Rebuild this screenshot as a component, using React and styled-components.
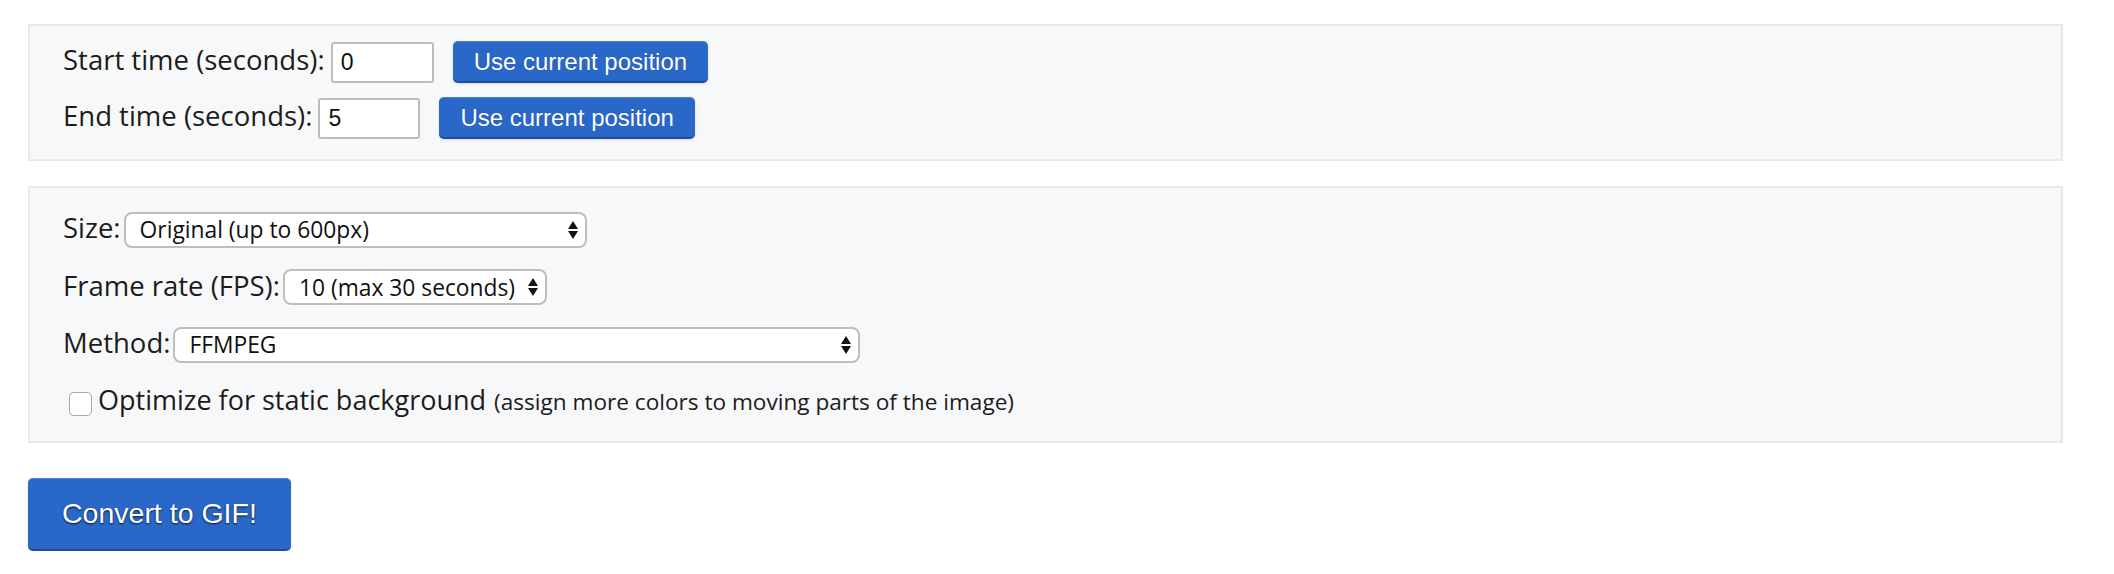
import React from "react";
import styled, { createGlobalStyle } from "styled-components";

const GlobalStyle = createGlobalStyle`
  html, body { margin: 0; padding: 0; background: #ffffff; }
  body { font-family: "Open Sans", "Noto Sans", sans-serif; color: #1c1c1c; }
  * { box-sizing: border-box; }
`;

const Page = styled.div`
  padding: 24px 51px 0 28px;
`;

const Panel = styled.div`
  background: #f7f8fa;
  border: 2px solid #e8e9eb;
  padding: ${(p) => p.$pad};
  & + & { margin-top: 25px; }
`;

const Row = styled.div`
  display: flex;
  align-items: baseline;
  margin-top: ${(p) => p.$gap || 0}px;
`;

const Label = styled.label`
  font-family: "Open Sans", "Noto Sans", sans-serif;
  font-size: ${(p) => p.$size || 27.5}px;
  line-height: 1.25;
  color: #1c1c1c;
  margin-right: ${(p) => p.$gap}px;
  white-space: nowrap;
`;

const TimeInput = styled.input`
  width: ${(p) => p.$w}px;
  height: 41px;
  border: 2px solid #bdbdbd;
  border-radius: 3px;
  background: #ffffff;
  padding: 0 8px;
  margin: 0 19px 0 0;
  font-family: "Liberation Sans", Arial, sans-serif;
  font-size: 23px;
  color: #111;
  outline: none;
`;

const BlueButton = styled.button`
  font-family: "Liberation Sans", Arial, sans-serif;
  font-size: ${(p) => p.$size}px;
  height: ${(p) => p.$h}px;
  padding: 0 ${(p) => p.$px}px;
  color: #ffffff;
  background: #2967c8;
  border: none;
  border-top: 1px solid #4a82d8;
  border-bottom: 2px solid #1c4d9a;
  border-radius: 5px;
  box-shadow: 0 1px 3px rgba(0, 0, 0, 0.12);
  text-shadow: ${(p) => (p.$shadow ? "0 1px 2px rgba(0,0,0,0.8)" : "0 0 1px rgba(0,0,0,0.25)")};
  cursor: pointer;
  white-space: nowrap;
`;

const SelectWrap = styled.span`
  position: relative;
  display: inline-flex;
`;

const Select = styled.select`
  appearance: none;
  -webkit-appearance: none;
  width: ${(p) => p.$w}px;
  height: 36px;
  border: 2px solid #bebebe;
  border-radius: 8px;
  background: #ffffff;
  padding: 0 28px 0 14px;
  font-family: "Open Sans", "Noto Sans", sans-serif;
  font-size: 22.8px;
  color: #111;
  outline: none;
`;

const Arrows = styled.svg`
  position: absolute;
  right: 9px;
  top: 50%;
  transform: translateY(-50%);
  pointer-events: none;
`;

const CheckBox = styled.input`
  appearance: none;
  -webkit-appearance: none;
  width: 23px;
  height: 24px;
  margin: 0 6px 0 6px;
  border: 1.5px solid #a9a9a9;
  border-radius: 5px;
  background: #ffffff;
  align-self: center;
  position: relative;
  top: 4px;
`;

const Hint = styled.span`
  font-size: 22.6px;
  margin-left: 8px;
  color: #1c1c1c;
  white-space: nowrap;
`;

const Footer = styled.div`
  margin-top: 35px;
`;

function Dropdown({ width, value, options }) {
  return (
    <SelectWrap>
      <Select $w={width} defaultValue={value}>
        {options.map((o) => (
          <option key={o}>{o}</option>
        ))}
      </Select>
      <Arrows width="10" height="18" viewBox="0 0 10 18">
        <path d="M5 0 L10 8 L0 8 Z" fill="#111" />
        <path d="M0 10 L10 10 L5 18 Z" fill="#111" />
      </Arrows>
    </SelectWrap>
  );
}

export default function App() {
  return (
    <>
      <GlobalStyle />
      <Page>
        <Panel $pad="15px 33px 20px">
          <Row>
            <Label $gap={6}>Start time (seconds):</Label>
            <TimeInput $w={103} defaultValue="0" />
            <BlueButton $size={24} $h={42} $px={21}>Use current position</BlueButton>
          </Row>
          <Row $gap={14}>
            <Label $gap={6}>End time (seconds):</Label>
            <TimeInput $w={102} defaultValue="5" />
            <BlueButton $size={24} $h={42} $px={21}>Use current position</BlueButton>
          </Row>
        </Panel>
        <Panel $pad="23px 33px 24px">
          <Row>
            <Label $gap={3}>Size:</Label>
            <Dropdown width={463} value="Original (up to 600px)" options={["Original (up to 600px)", "Small (up to 320px)"]} />
          </Row>
          <Row $gap={21}>
            <Label $gap={3}>Frame rate (FPS):</Label>
            <Dropdown width={264} value="10 (max 30 seconds)" options={["5 (max 60 seconds)", "10 (max 30 seconds)", "20 (max 15 seconds)"]} />
          </Row>
          <Row $gap={21}>
            <Label $gap={3}>Method:</Label>
            <Dropdown width={687} value="FFMPEG" options={["FFMPEG", "ImageMagick"]} />
          </Row>
          <Row $gap={20}>
            <CheckBox type="checkbox" id="opt" />
            <Label htmlFor="opt" $gap={0} $size={27}>Optimize for static background</Label>
            <Hint>(assign more colors to moving parts of the image)</Hint>
          </Row>
        </Panel>
        <Footer>
          <BlueButton $size={28.5} $h={73} $px={34} $shadow>Convert to GIF!</BlueButton>
        </Footer>
      </Page>
    </>
  );
}
